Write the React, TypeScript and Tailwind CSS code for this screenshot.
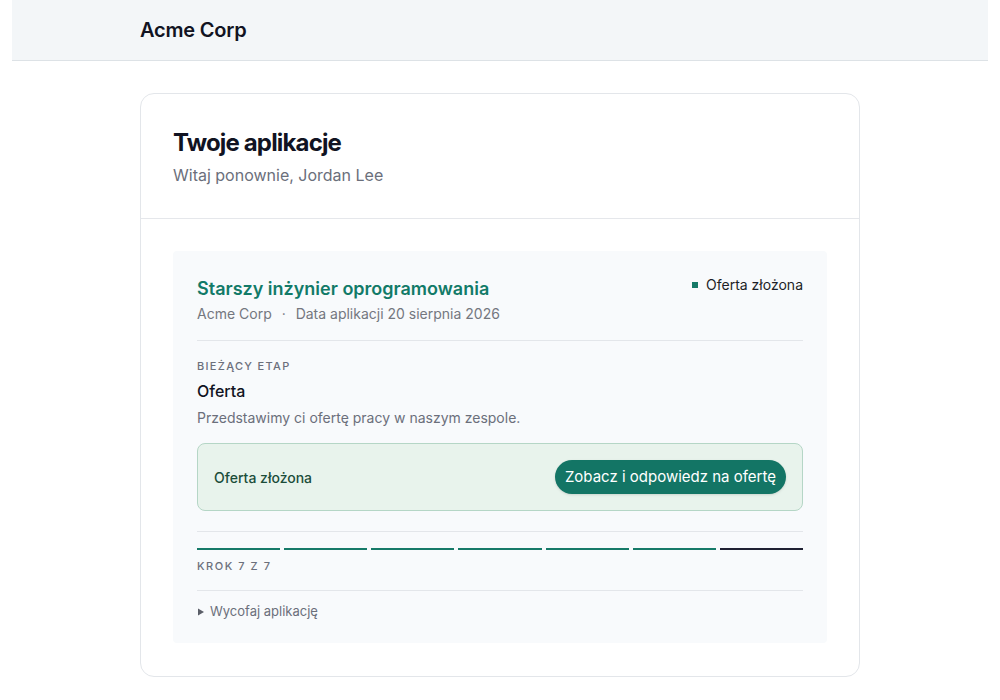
import React from "react";

const STEPS = 7;
const CURRENT = 7;

export default function App() {
  return (
    <div className="min-h-[700px] bg-white px-3 font-['Inter',sans-serif] text-[#111322]">
      <header className="flex h-[61px] items-center border-b border-[#dde2e6] bg-[#f3f6f8] pl-[128px]">
        <span className="text-[20px] font-semibold tracking-[-0.01em]">Acme Corp</span>
      </header>

      <main className="flex justify-center pt-8">
        <section className="w-[720px] rounded-[14px] border border-[#e3e6ea] bg-white">
          <div className="border-b border-[#e5e7eb] px-8 pb-[31px] pt-[33px]">
            <h1 className="text-[24px] font-bold leading-[32px] tracking-[-0.035em]">Twoje aplikacje</h1>
            <p className="mt-[4px] text-[16px] leading-[24px] text-[#6b6f7b]">Witaj ponownie, Jordan Lee</p>
          </div>

          <div className="px-8 pb-[33px] pt-8">
            <article className="rounded-[4px] bg-[#f8fafc] px-6 pb-[21px] pt-6">
              <div className="flex items-start justify-between border-b border-[#e3e6ea] pb-[16px]">
                <div>
                  <h2 className="text-[18px] font-semibold leading-[28px] text-[#127a68]">
                    Starszy inżynier oprogramowania
                  </h2>
                  <p className="mt-[1px] text-[14px] leading-[20px] text-[#74777f]">
                    Acme Corp <span className="mx-[6px]">·</span> Data aplikacji 20 sierpnia 2026
                  </p>
                </div>
                <div className="flex items-center gap-2 text-[14px] leading-[20px] text-[#1c1e26]">
                  <span className="h-[6px] w-[6px] bg-[#167a68]" />
                  Oferta złożona
                </div>
              </div>

              <div className="pt-[17px]">
                <p className="text-[11px] font-medium uppercase leading-[16px] tracking-[0.12em] text-[#6b6f7b]">
                  Bieżący etap
                </p>
                <p className="mt-[5px] text-[16px] font-medium leading-[24px] text-[#111322]">Oferta</p>
                <p className="mt-[5px] text-[14px] leading-[20px] text-[#6b6f7b]">
                  Przedstawimy ci ofertę pracy w naszym zespole.
                </p>

                <div className="mt-[15px] flex h-[68px] items-center justify-between rounded-[8px] border border-[#b5d6c6] bg-[#e8f3ec] pl-4 pr-4">
                  <span className="text-[14px] font-medium text-[#1b4d3a]">Oferta złożona</span>
                  <button
                    type="button"
                    className="h-[34px] rounded-full bg-[#137565] px-[10px] text-[15px] font-normal text-white shadow-sm"
                  >
                    Zobacz i odpowiedz na ofertę
                  </button>
                </div>
              </div>

              <div className="mt-5 border-t border-[#e3e6ea] pt-4">
                <div className="flex gap-1">
                  {Array.from({ length: STEPS }).map((_, i) => (
                    <div
                      key={i}
                      className={
                        "h-[2px] flex-1 " + (i + 1 === CURRENT ? "bg-[#1f2133]" : "bg-[#167a68]")
                      }
                    />
                  ))}
                </div>
                <p className="mt-[8px] text-[11px] font-medium uppercase leading-[16px] tracking-[0.14em] text-[#6b6f7b]">
                  Krok 7 z 7
                </p>
              </div>

              <div className="mt-4 border-t border-[#e3e6ea] pt-[11px]">
                <button type="button" className="flex items-center gap-[5px] text-[13px] text-[#6b6f7b]">
                  <svg width="8" height="8" viewBox="0 0 8 8">
                    <path d="M1 0.5 L7 4 L1 7.5 Z" fill="#5b5e68" />
                  </svg>
                  Wycofaj aplikację
                </button>
              </div>
            </article>
          </div>
        </section>
      </main>
    </div>
  );
}
